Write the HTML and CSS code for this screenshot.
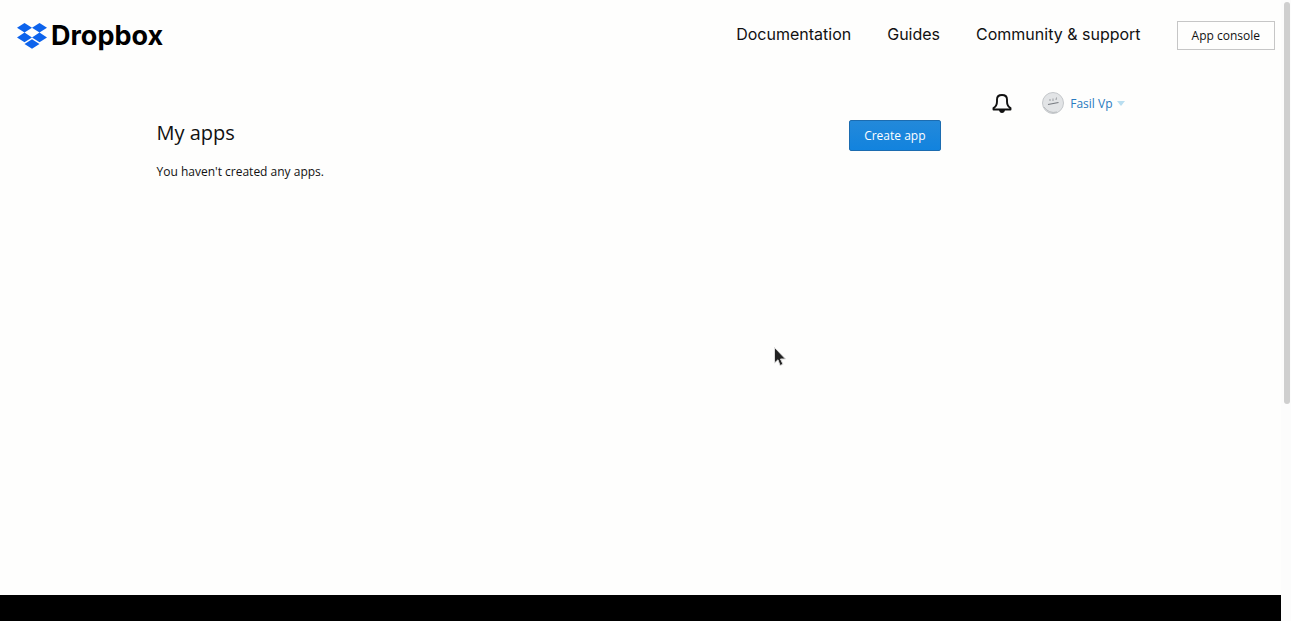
FILE: index.html
```html
<!DOCTYPE html>
<html lang="en">
<head>
<meta charset="utf-8">
<title>My apps - Dropbox</title>
<link rel="stylesheet" href="styles.css">
</head>
<body>
<div class="page">
  <header class="topbar">
    <a class="brand" href="#">
      <svg class="brand-mark" viewBox="0 0 30 26" aria-hidden="true">
        <path fill="#0d63ec" d="M7.500 0 15 4.800 7.500 9.600 0 4.800zM22.500 0 30 4.800 22.500 9.600 15 4.800zM7.500 9.600 15 14.400 7.500 19.200 0 14.400zM22.500 9.600 30 14.400 22.500 19.200 15 14.400zM15 16.200 22.500 21 15 25.800 7.500 21z"/>
      </svg>
      <span>Dropbox</span>
    </a>
    <nav class="links">
      <a class="link" href="#">Documentation</a>
      <a class="link" href="#">Guides</a>
      <a class="link" href="#">Community &amp; support</a>
      <a class="console" href="#">App console</a>
    </nav>
  </header>
  <div class="content">
    <div class="account">
      <button class="bell" type="button" aria-label="Notifications">
        <svg width="20" height="20" viewBox="0 0 20 20" fill="none" stroke="#111" stroke-width="1.900" stroke-linejoin="round" aria-hidden="true">
          <path d="M1.500 16.500V15Q5 13 5 8.500V6.500Q5 2 10 2T15 6.500V8.500Q15 13 18.500 15V16.500Z"/>
          <path fill="#111" stroke="none" d="M7 17h6q-.5 3-3 3t-3-3z"/>
        </svg>
      </button>
      <button class="user" type="button">
        <svg width="22" height="22" viewBox="0 0 22 22" fill="none" aria-hidden="true">
          <circle cx="11" cy="11" r="10.500" fill="#e2e4e6" stroke="#c4c7ca"/>
          <path d="M2 15Q7 22 15 20" stroke="#b9bcbf"/>
          <path d="M6 12.500 16.500 10.500" stroke="#777b80" stroke-width="1.200"/>
          <path d="M8 7v2M11 6.500v2.500M14.500 5.500l-.5 2.500" stroke="#9a9da1"/>
        </svg>
        <span>Fasil Vp</span>
        <svg class="caret" width="8" height="5" viewBox="0 0 8 5" aria-hidden="true"><path fill="#b9def0" d="M0 0h8L4 5z"/></svg>
      </button>
    </div>
    <main class="apps">
      <div class="heading">
        <h1>My apps</h1>
        <button class="create" type="button">Create app</button>
      </div>
      <p>You haven't created any apps.</p>
    </main>
  </div>
  <footer class="footer"></footer>
</div>
<div class="scroll"><div class="thumb"></div></div>
<svg class="pointer" width="14" height="22" viewBox="0 0 14 22" aria-hidden="true">
  <path fill="#222" stroke="#ddd" d="M1.500 1.500V17l3.500-3.200L7 19.500l3-1.200L7.500 13h5z"/>
</svg>
</body>
</html>
```

FILE: styles.css
```css
* {
  box-sizing: border-box;
}

body {
  display: flex;
  min-height: 100vh;
  margin: 0;
  background: #fefefd;
  color: #111;
  font-family: "Open Sans", "Noto Sans", sans-serif;
  font-size: 12px;
  line-height: 17px;
}

a {
  color: inherit;
  text-decoration: none;
}

button {
  padding: 0;
  border: 0;
  background: none;
  font: inherit;
}

.page {
  display: flex;
  flex: 1;
  flex-direction: column;
}

.topbar {
  display: flex;
  align-items: center;
  justify-content: space-between;
  height: 71px;
  padding: 0 6px 0 17px;
}

.brand {
  display: flex;
  align-items: center;
  gap: 4px;
  color: #000;
  font-family: Inter, sans-serif;
  font-size: 27px;
  font-weight: 700;
  line-height: 32px;
}

.brand-mark {
  width: 30px;
  height: 26px;
}

.links {
  display: flex;
  align-items: center;
  gap: 36px;
}

.link {
  padding-bottom: 2px;
  font-family: Inter, sans-serif;
  font-size: 16px;
}

.console {
  padding: 5px 14px;
  border: 1px solid #c6c6c6;
}

.content {
  flex: 1;
  width: 100%;
  max-width: 968px;
  margin: 0 auto;
  padding-top: 21px;
}

.account {
  display: flex;
  align-items: center;
  justify-content: flex-end;
  gap: 30px;
  height: 22px;
}

.bell {
  display: flex;
}

.user {
  display: flex;
  align-items: center;
  gap: 6px;
  color: #2a7bc0;
}

.caret {
  margin-left: -2px;
}

.apps {
  max-width: 784px;
  padding-top: 5px;
}

.heading {
  display: flex;
  align-items: center;
  justify-content: space-between;
}

h1 {
  margin: 0;
  padding-bottom: 4px;
  font-size: 20px;
  font-weight: 400;
  line-height: 28px;
}

.create {
  padding: 6px 14px;
  border: 1px solid #1c6cb0;
  border-radius: 2px;
  background: linear-gradient(#2389da, #1283de);
  color: #fff;
}

p {
  margin: 12px 0 0;
}

.footer {
  height: 26px;
  background: #000;
}

.scroll {
  width: 10px;
  padding: 2px 1px 0 3px;
  background: #fcfcfc;
}

.thumb {
  height: calc(65vh - 2px);
  border-radius: 3px;
  background: #cfcfcf;
}

.pointer {
  position: absolute;
  top: 346px;
  left: 773px;
}
```
